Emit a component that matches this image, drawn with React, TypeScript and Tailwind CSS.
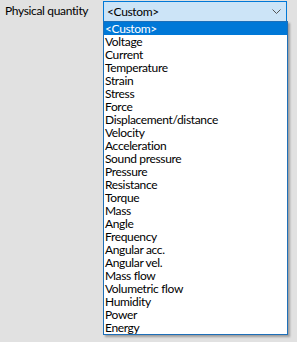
import React from "react";

const items = [
  "<Custom>",
  "Voltage",
  "Current",
  "Temperature",
  "Strain",
  "Stress",
  "Force",
  "Displacement/distance",
  "Velocity",
  "Acceleration",
  "Sound pressure",
  "Pressure",
  "Resistance",
  "Torque",
  "Mass",
  "Angle",
  "Frequency",
  "Angular acc.",
  "Angular vel.",
  "Mass flow",
  "Volumetric flow",
  "Humidity",
  "Power",
  "Energy",
];

export default function App() {
  return (
    <div
      className="w-[297px] h-[342px] bg-[#e1e1e1] text-[12px] tracking-[-0.35px] text-black overflow-hidden"
      style={{ fontFamily: 'Lato, sans-serif' }}
    >
      <div className="flex items-start pt-[1px]">
        <div className="w-[103px] pl-[5px] pt-[2px] leading-[16px]">Physical quantity</div>
        <div className="relative w-[184px]">
          <div className="h-[21px] border border-[#0078d7] bg-[#cce4f7] flex items-center pl-[3px] pr-[5px] leading-[14px]">
            <span className="flex-1">&lt;Custom&gt;</span>
            <svg width="9" height="5" viewBox="0 0 9 5">
              <path d="M0.5 0.5 L4.5 4.5 L8.5 0.5" fill="none" stroke="#555" strokeWidth="1" />
            </svg>
          </div>
          <div className="absolute left-0 top-[20px] w-[185px] border border-[#1e6fb8] bg-white shadow-[2px_2px_2px_rgba(0,0,0,0.3)]">
            {items.map((it, i) => (
              <div
                key={it}
                className={
                  "h-[13px] leading-[13px] pl-[1px] whitespace-nowrap " +
                  (i === 0 ? "bg-[#0078d7] text-white" : "")
                }
              >
                {it}
              </div>
            ))}
          </div>
        </div>
      </div>
    </div>
  );
}
